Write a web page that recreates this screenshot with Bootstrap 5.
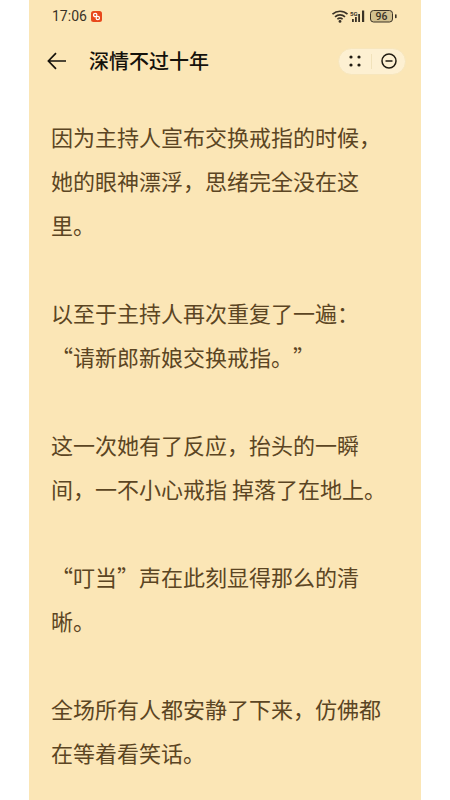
<!DOCTYPE html>
<html lang="zh"><head><meta charset="utf-8">
<link rel="stylesheet" href="https://cdn.jsdelivr.net/npm/bootstrap@5.3.0/dist/css/bootstrap.min.css">
<style>
html,body{height:100%;overflow:hidden;background:#fff}
body{font-family:"Noto Sans CJK SC","Liberation Sans",sans-serif}
.phone-shell{width:392px;height:800px;margin-left:29px;background:#fbe6b6;overflow:hidden}
.status-row{height:32px;padding:0 23px 0 23px;color:#3a3226;font-family:Roboto,"Noto Sans",sans-serif;font-size:14px}
.app-badge{width:11px;height:11px;border-radius:2.5px;background:#e8481c}
.title-row{height:58px;padding:0 15px 0 17px}
.book-title{font-size:20px;font-weight:500;color:#15120c;margin-left:21px;line-height:28px}
.capsule{width:68px;height:27px;border-radius:14px;background:#fdf0d2;border:1px solid #f7e6bd}
.capsule-sep{width:1px;height:15px;background:#f1e2bb}
.reader-text{padding:24px 0 0 22px;font-size:22px;line-height:44px;color:#5b4523;white-space:nowrap;text-spacing-trim:space-all;font-kerning:none}
.reader-text p{margin:0 0 44px}
</style></head><body>
<div class="phone-shell">
  <div class="status-row d-flex align-items-center justify-content-between">
    <div class="d-flex align-items-center gap-1"><span>17:06</span>
      <svg class="app-badge" viewBox="0 0 11 11"><circle cx="4.2" cy="4" r="1.7" fill="none" stroke="#fff" stroke-width="1.2"/><circle cx="6.8" cy="7" r="1.7" fill="none" stroke="#fff" stroke-width="1.2"/></svg>
    </div>
    <svg width="66" height="14" viewBox="0 0 66 14">
      <g fill="none" stroke="#3a3226" stroke-width="1.6"><path d="M.5 5.2a11 11 0 0 1 15 0"/><path d="M3 7.8a7.4 7.4 0 0 1 10 0"/><path d="M5.4 10.2a3.6 3.6 0 0 1 5.2 0"/></g>
      <circle cx="8" cy="12.4" r="1.4" fill="#3a3226"/>
      <g fill="#3a3226"><rect x="20" y="10" width="1.8" height="3"/><rect x="23" y="8" width="1.8" height="5"/><rect x="26.2" y="5" width="1.8" height="8"/><rect x="30" y="1.5" width="2.2" height="11.5"/></g>
      <text x="18" y="6.5" font-size="6" font-weight="700" fill="#3a3226" font-family="Roboto">5G</text>
      <rect x="38.5" y="1.5" width="22" height="11.5" rx="3" fill="#d3c190" stroke="#3a3226" stroke-width="1"/>
      <text x="49.5" y="11.2" font-size="10.5" font-weight="500" text-anchor="middle" fill="#3a3226" font-family="Roboto">96</text>
      <rect x="63" y="5.2" width="1.6" height="4" rx=".7" fill="#3a3226"/>
    </svg>
  </div>
  <div class="title-row d-flex align-items-center">
    <svg width="22" height="22" viewBox="0 0 22 22" fill="none" stroke="#15120c" stroke-width="1.7"><path d="M20 11H2.5M10 3.2 2.4 11l7.6 7.8"/></svg>
    <span class="book-title">深情不过十年</span>
    <div class="capsule d-flex align-items-center justify-content-around ms-auto px-1">
      <svg width="14" height="14" viewBox="0 0 14 14" fill="#211c12"><circle cx="3" cy="3" r="1.6"/><circle cx="11" cy="3" r="1.6"/><circle cx="3" cy="11" r="1.6"/><circle cx="11" cy="11" r="1.6"/></svg>
      <span class="capsule-sep"></span>
      <svg width="16" height="16" viewBox="0 0 16 16" fill="none" stroke="#211c12" stroke-width="1.5"><circle cx="8" cy="8" r="7"/><path d="M4.5 8h7"/></svg>
    </div>
  </div>
  <div class="reader-text">
    <p>因为主持人宣布交换戒指的时候&#xFF0C;<br>她的眼神漂浮&#xFF0C;思绪完全没在这<br>里。</p>
    <p>以至于主持人再次重复了一遍&#xFF1A;<br>“请新郎新娘交换戒指。”</p>
    <p>这一次她有了反应&#xFF0C;抬头的一瞬<br>间&#xFF0C;一不小心戒指 掉落了在地上。</p>
    <p>“叮当”声在此刻显得那么的清<br>晰。</p>
    <p>全场所有人都安静了下来&#xFF0C;仿佛都<br>在等着看笑话。</p>
  </div>
</div>
</body></html>
